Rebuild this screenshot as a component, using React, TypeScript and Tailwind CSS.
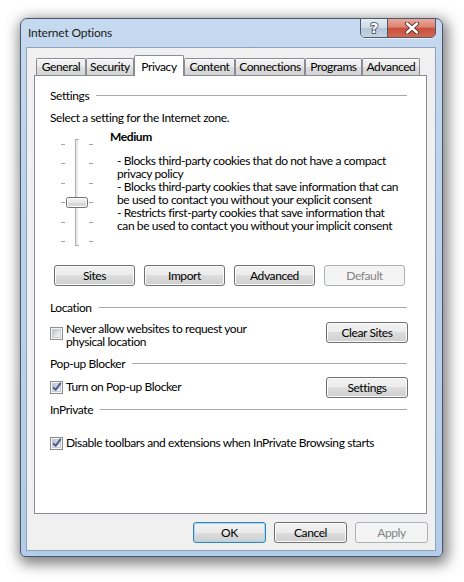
import React from "react";

type BtnProps = {
  label: string;
  className?: string;
  disabled?: boolean;
  isDefault?: boolean;
};

function WinButton({ label, className = "", disabled, isDefault }: BtnProps) {
  let look =
    "border-[#707070] bg-[linear-gradient(#f2f2f2_0%,#ebebeb_50%,#dddddd_50%,#cfcfcf_100%)] shadow-[inset_0_0_0_1px_#fbfbfb] text-black";
  if (isDefault)
    look =
      "border-[#3c7fb1] bg-[linear-gradient(#f2f2f2_0%,#ebebeb_50%,#dddddd_50%,#cfcfcf_100%)] shadow-[inset_0_0_0_1px_#9fdcf9] text-black";
  if (disabled)
    look = "border-[#adb2b5] bg-[#f4f4f4] text-[#838383]";
  return (
    <button
      className={`h-[21px] shrink-0 rounded-[3px] border text-[12px] leading-none flex items-center justify-center ${look} ${className}`}
    >
      {label}
    </button>
  );
}

function CheckBox({ checked }: { checked?: boolean }) {
  return (
    <span className="relative w-[13px] h-[13px] shrink-0 border border-[#8e8f8f] bg-[#f4f4f4] p-[1px] flex">
      <span className="flex-1 border border-[#c9ccd0] bg-[linear-gradient(135deg,#b9bec4,#e4e6e8_60%,#f3f3f3)]" />
      {checked && (
        <svg
          className="absolute left-[0px] top-[-1px]"
          width="12"
          height="12"
          viewBox="0 0 12 12"
        >
          <path
            d="M2.2 6.2 L4.6 8.8 L9.8 1.8"
            fill="none"
            stroke="#4a5f97"
            strokeWidth="2"
            strokeLinejoin="round"
          />
        </svg>
      )}
    </span>
  );
}

function SectionHead({ title, className = "" }: { title: string; className?: string }) {
  return (
    <div className={`flex items-center h-[15px] ${className}`}>
      <span className="whitespace-nowrap">{title}</span>
      <span className="ml-[7px] flex-1 h-px bg-[#a9a9a9] mr-[1px]" />
    </div>
  );
}

function PrivacySlider() {
  const ticks = [6, 25, 45, 64, 84, 103];
  return (
    <svg width="50" height="109" viewBox="0 0 50 109" className="shrink-0">
      {ticks.map((y) => (
        <g key={y}>
          <line x1="5" x2="9" y1={y + 0.5} y2={y + 0.5} stroke="#a5a5a5" />
          <line x1="33" x2="37" y1={y + 0.5} y2={y + 0.5} stroke="#a5a5a5" />
        </g>
      ))}
      <rect x="19.5" y="1.5" width="3" height="106" fill="#e7eaea" stroke="#b0b0b0" />
      <line x1="22.5" x2="22.5" y1="2" y2="107" stroke="#ffffff" />
      <defs>
        <linearGradient id="thumb" x1="0" y1="0" x2="0" y2="1">
          <stop offset="0" stopColor="#f6f6f6" />
          <stop offset="0.5" stopColor="#e6e6e6" />
          <stop offset="0.55" stopColor="#d6d6d6" />
          <stop offset="1" stopColor="#dcdcdc" />
        </linearGradient>
      </defs>
      <rect x="10.5" y="59.5" width="21" height="10" rx="2" fill="url(#thumb)" stroke="#707070" />
      <rect x="11.5" y="60.5" width="19" height="8" rx="1" fill="none" stroke="#ffffff" strokeOpacity="0.8" />
    </svg>
  );
}

const tabs = [
  { name: "General", w: "w-[50px]" },
  { name: "Security", w: "w-[48px]" },
  { name: "Privacy", w: "w-[50px]", active: true },
  { name: "Content", w: "w-[51px]" },
  { name: "Connections", w: "w-[70px]" },
  { name: "Programs", w: "w-[57px]" },
  { name: "Advanced", w: "w-[58px]" },
];

function TitleButtons() {
  return (
    <div className="flex self-start -mt-px h-[20px] rounded-b-[5px] border border-[#4d5a69] overflow-hidden shadow-[0_1px_0_rgba(255,255,255,0.6)]">
      <div className="w-[27px] h-full flex items-center justify-center bg-[linear-gradient(#e3ebf3,#cfdbe7_48%,#b4c5d7_52%,#c6d5e4)] border-r border-[#4d5a69]">
        <svg width="14" height="16" viewBox="0 0 14 16">
          <text
            x="7"
            y="13"
            textAnchor="middle"
            fontSize="14"
            fontWeight="700"
            fontFamily="'DejaVu Sans', sans-serif"
            fill="#ffffff"
            stroke="#3d4a59"
            strokeWidth="1.6"
            paintOrder="stroke"
          >
            ?
          </text>
        </svg>
      </div>
      <div className="w-[47px] h-full flex items-center justify-center bg-[linear-gradient(#e9a99a,#dc8370_45%,#c9503c_52%,#d4664f)]">
        <svg width="16" height="12" viewBox="0 0 16 12">
          <path d="M3 1.5 L13 10.5 M13 1.5 L3 10.5" stroke="#4a2a2a" strokeWidth="4.2" strokeLinecap="round" />
          <path d="M3 1.5 L13 10.5 M13 1.5 L3 10.5" stroke="#ffffff" strokeWidth="2.4" strokeLinecap="round" />
        </svg>
      </div>
    </div>
  );
}

export default function App() {
  return (
    <div className="w-[464px] h-[582px] bg-white pt-[18px] pl-[20px] font-['Lato','Noto_Sans',sans-serif] text-[12px] tracking-[-0.4px] text-black">
      <div className="w-[423px] h-[539px] flex flex-col rounded-t-[7px] rounded-b-[5px] border border-[#47566a] bg-[linear-gradient(#c5d9ef,#bcd3ec_30%,#b3cce8_100%)] shadow-[2px_4px_14px_3px_rgba(0,0,0,0.5)] pl-[5px] pr-[6px] pb-[5px]">
        {/* title bar */}
        <div className="h-[28px] flex items-center justify-between pl-[2px]">
          <span className="text-[12px] tracking-[-0.2px] text-[#1b1b1b] -mt-[1px]">Internet Options</span>
          <TitleButtons />
        </div>

        {/* client area */}
        <div className="flex-1 flex flex-col bg-[#f0f0f0] border border-[#8ea3bb]">
          {/* tabs */}
          <div className="flex items-end h-[20px] ml-[9px] mt-[7px]">
            {tabs.map((t) =>
              t.active ? (
                <div
                  key={t.name}
                  className={`${t.w} h-[21px] -mb-px relative z-10 bg-white border border-b-0 border-[#898c95] rounded-t-[2px] flex items-start justify-center pt-[2px]`}
                >
                  {t.name}
                </div>
              ) : (
                <div
                  key={t.name}
                  className={`${t.w} h-[17px] bg-[linear-gradient(#f3f3f3,#ebebeb_50%,#dddddd_50%,#d4d4d4)] border border-b-0 border-[#898c95] rounded-t-[2px] flex items-center justify-center shadow-[inset_0_1px_0_#fff]`}
                >
                  {t.name}
                </div>
              )
            )}
          </div>

          {/* panel */}
          <div className="h-[439px] ml-[7px] mr-[8px] bg-white border border-[#898c95] pl-[15px] pr-[18px] flex flex-col">
            <SectionHead title="Settings" className="mt-[12px]" />
            <div className="mt-[7px] h-[15px] leading-[15px]">Select a setting for the Internet zone.</div>

            <div className="mt-[4px] flex">
              <div className="ml-[6px] mt-[9px]">
                <PrivacySlider />
              </div>
              <div className="ml-[4px] flex flex-col">
                <div className="font-bold h-[15px] leading-[15px]">Medium</div>
                <div className="mt-[10px] ml-[7px] leading-[13px] whitespace-nowrap">
                  - Blocks third-party cookies that do not have a compact
                  <br />
                  privacy policy
                  <br />- Blocks third-party cookies that save information that can
                  <br />
                  be used to contact you without your explicit consent
                  <br />- Restricts first-party cookies that save information that
                  <br />
                  can be used to contact you without your implicit consent
                </div>
              </div>
            </div>

            <div className="mt-[18px] ml-[4px] flex gap-[9px]">
              <WinButton label="Sites" className="w-[81px]" />
              <WinButton label="Import" className="w-[81px]" />
              <WinButton label="Advanced" className="w-[81px]" />
              <WinButton label="Default" className="w-[81px]" disabled />
            </div>

            <SectionHead title="Location" className="mt-[14px]" />
            <div className="mt-[7px] flex justify-between items-start">
              <div className="flex items-start">
                <span className="mt-[5px]">
                  <CheckBox />
                </span>
                <span className="ml-[3px] leading-[13px]">
                  Never allow websites to request your
                  <br />
                  physical location
                </span>
              </div>
              <WinButton label="Clear Sites" className="w-[82px]" />
            </div>

            <SectionHead title="Pop-up Blocker" className="mt-[8px]" />
            <div className="mt-[6px] flex justify-between items-start">
              <div className="flex items-start">
                <span className="mt-[4px]">
                  <CheckBox checked />
                </span>
                <span className="ml-[3px] mt-[3px] leading-[13px]">Turn on Pop-up Blocker</span>
              </div>
              <WinButton label="Settings" className="w-[82px]" />
            </div>

            <SectionHead title="InPrivate" className="mt-[4px]" />
            <div className="mt-[20px] flex items-center h-[13px]">
              <CheckBox checked />
              <span className="ml-[3px] leading-[13px] -mt-[2px] whitespace-nowrap">
                Disable toolbars and extensions when InPrivate Browsing starts
              </span>
            </div>
          </div>

          {/* dialog buttons */}
          <div className="mt-[8px] flex justify-end gap-[8px] pr-[7px]">
            <WinButton label="OK" className="w-[73px]" isDefault />
            <WinButton label="Cancel" className="w-[73px]" />
            <WinButton label="Apply" className="w-[73px]" disabled />
          </div>
        </div>
      </div>
    </div>
  );
}
